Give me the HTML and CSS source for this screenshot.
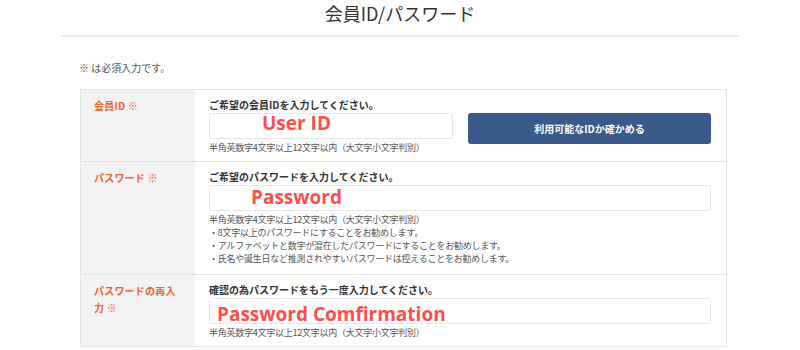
FILE: index.html
```html
<!DOCTYPE html>
<html lang="ja">
<head>
    <meta charset="UTF-8">
    <meta name="viewport" content="width=device-width, initial-scale=1.0">
    <title>会員ID/パスワード</title>
    <link rel="stylesheet" href="styles.css">
</head>
<body>

    <!-- Page Title -->
    <div class="page-head">
        <h1>会員ID/パスワード</h1>
    </div>

    <p class="note">※ は必須入力です。</p>

    <!-- Form Table -->
    <div class="form-table">

        <div class="form-row">
            <div class="form-label">会員ID ※</div>
            <div class="form-body">
                <div class="id-line">
                    <div class="id-field">
                        <p class="lead">ご希望の会員IDを入力してください。</p>
                        <div class="field">
                            <input type="text" class="text-input">
                            <span class="mark mark-id">User ID</span>
                        </div>
                        <p class="hint">半角英数字4文字以上12文字以内（大文字小文字判別）</p>
                    </div>
                    <button class="check-button">利用可能なIDか確かめる</button>
                </div>
            </div>
        </div>

        <div class="form-row">
            <div class="form-label">パスワード ※</div>
            <div class="form-body">
                <p class="lead">ご希望のパスワードを入力してください。</p>
                <div class="field">
                    <input type="password" class="text-input">
                    <span class="mark mark-pass">Password</span>
                </div>
                <p class="hint">半角英数字4文字以上12文字以内（大文字小文字判別）</p>
                <ul class="hint-list">
                    <li>・8文字以上のパスワードにすることをお勧めします。</li>
                    <li>・アルファベットと数字が混在したパスワードにすることをお勧めします。</li>
                    <li>・氏名や誕生日など推測されやすいパスワードは控えることをお勧めします。</li>
                </ul>
            </div>
        </div>

        <div class="form-row">
            <div class="form-label">パスワードの再入力 ※</div>
            <div class="form-body">
                <p class="lead">確認の為パスワードをもう一度入力してください。</p>
                <div class="field">
                    <input type="password" class="text-input">
                    <span class="mark mark-confirm">Password Comfirmation</span>
                </div>
                <p class="hint">半角英数字4文字以上12文字以内（大文字小文字判別）</p>
            </div>
        </div>

    </div>

</body>
</html>
```

FILE: styles.css
```css
/* --- Base --- */
body {
    margin: 0;
    font-family: "Noto Sans CJK JP", "Noto Sans", sans-serif;
    color: #333;
    background-color: #fff;
}

p {
    margin: 0;
}

/* --- Title --- */
.page-head {
    margin: 0 60px;
    height: 35px;
    border-bottom: 2px solid #ececec;
}

.page-head h1 {
    margin: 0;
    font-size: 18px;
    font-weight: 400;
    line-height: 26px;
    text-align: center;
    color: #333;
}

.note {
    margin: 23px 0 13px 79px;
    font-size: 10px;
    line-height: 16px;
    color: #555;
}

/* --- Form Table --- */
.form-table {
    margin: 0 73px 0 80px;
    border: 1px solid #e3e3e3;
}

.form-row {
    display: grid;
    grid-template-columns: 114px 1fr;
    border-top: 1px solid #e3e3e3;
}
.form-row:first-child {
    border-top: none;
}

.form-label {
    background-color: #f2f2f2;
    padding: 7px 12px 0 13px;
    font-size: 10px;
    font-weight: 700;
    line-height: 17px;
    letter-spacing: 0.2px;
    color: #f0642f;
}

.form-body {
    padding: 7px 15px 7px 14px;
}

.lead {
    font-size: 10px;
    font-weight: 700;
    line-height: 16px;
    color: #333;
}

/* --- Inputs --- */
.field {
    position: relative;
}

.text-input {
    display: block;
    width: 100%;
    height: 26px;
    box-sizing: border-box;
    border: 1px solid #e6e6e6;
    border-radius: 3px;
    background-color: #fff;
    margin: 0;
}

/* red notes drawn over the fields */
.mark {
    position: absolute;
    font-family: "Open Sans", sans-serif;
    font-size: 19px;
    font-weight: 700;
    line-height: 20px;
    color: #ff4d4d;
    white-space: nowrap;
}
.mark-id { left: 53px; top: 0; }
.mark-pass { left: 42px; top: 2px; }
.mark-confirm { left: 8px; top: 6px; }

.hint {
    margin-top: 2px;
    font-size: 9px;
    line-height: 13px;
    letter-spacing: -0.25px;
    color: #555;
}

.hint-list {
    list-style: none;
    margin: 0 0 2px;
    padding: 0;
    font-size: 9px;
    line-height: 13px;
    letter-spacing: -0.25px;
    color: #555;
}

/* --- ID row --- */
.id-line {
    display: flex;
    gap: 15px;
}

.id-field {
    width: 244px;
}

.check-button {
    width: 243px;
    height: 31px;
    margin-top: 16px;
    background-color: #3a5a8b;
    color: #fff;
    border: none;
    border-radius: 3px;
    font-family: inherit;
    font-size: 10px;
    font-weight: 700;
    cursor: pointer;
}
```
